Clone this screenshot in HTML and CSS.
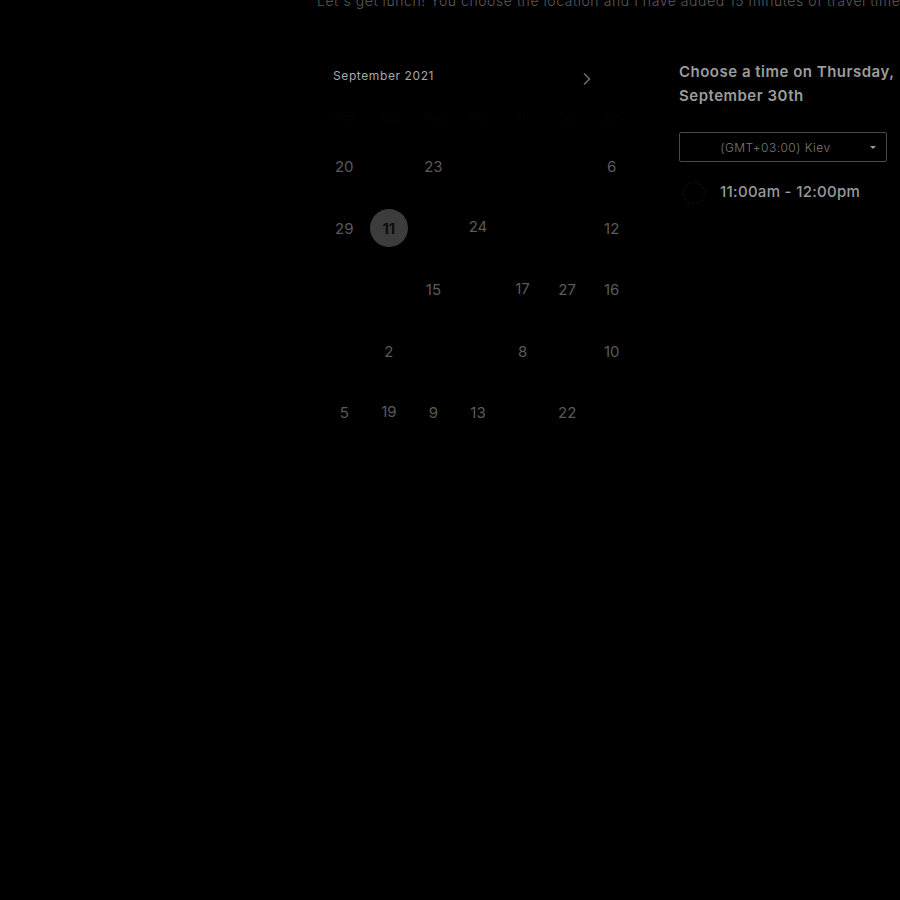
FILE: index.html
```html
<!DOCTYPE html>
<html lang="en">
<head>
<meta charset="utf-8">
<title>Choose a time</title>
<link rel="stylesheet" href="styles.css">
</head>
<body>
<div class="page">
  <p class="intro">Let's get lunch! You choose the location and I have added 15 minutes of travel time</p>
  <div class="content">
    <section class="calendar">
      <div class="cal-head">
        <span class="month">September 2021</span>
        <svg class="chev" width="10" height="14" viewBox="0 0 10 14"><path d="M2 1.5 L7.5 7 L2 12.5" fill="none" stroke="#6a6a6a" stroke-width="1.6"/></svg>
      </div>
      <div class="weekdays">
        <span>Mon</span><span>Tue</span><span>Wed</span><span>Thu</span><span>Fri</span><span>Sat</span><span>Sun</span>
      </div>
      <div class="days">
        <span class="day">20</span><span></span><span class="day">23</span><span></span><span></span><span></span><span class="day">6</span>
        <span class="day">29</span><span class="day"><b class="sel">11</b></span><span></span><span class="day up">24</span><span></span><span></span><span class="day">12</span>
        <span></span><span></span><span class="day">15</span><span></span><span class="day up1">17</span><span class="day">27</span><span class="day">16</span>
        <span></span><span class="day">2</span><span></span><span></span><span class="day">8</span><span></span><span class="day">10</span>
        <span class="day">5</span><span class="day up1">19</span><span class="day">9</span><span class="day">13</span><span></span><span class="day">22</span><span></span>
      </div>
    </section>
    <section class="panel">
      <h2 class="title">Choose a time on Thursday, September 30th</h2>
      <div class="select">
        <span class="select-text">(GMT+03:00) Kiev</span>
        <span class="caret"></span>
      </div>
      <div class="slot">
        <span class="radio"></span>
        <span class="slot-text">11:00am - 12:00pm</span>
      </div>
    </section>
  </div>
</div>
</body>
</html>
```

FILE: styles.css
```css
html, body {
  margin: 0;
  padding: 0;
  background: #000;
}
body {
  font-family: Inter, "Liberation Sans", sans-serif;
  color: #888;
  width: 900px;
  height: 900px;
  overflow: hidden;
}
.page {
  padding-left: 317px;
}
.intro {
  margin: -9px 0 0;
  font-size: 14px;
  font-weight: 300;
  line-height: 20px;
  color: #5c5c5c;
  white-space: nowrap;
  letter-spacing: 0.55px;
}
.content {
  display: flex;
  margin-top: 49px;
}
.calendar {
  flex: 0 0 312px;
  width: 312px;
  margin-left: 5px;
}
.cal-head {
  display: flex;
  align-items: center;
  justify-content: space-between;
  height: 30px;
  padding: 0 42px 0 11px;
}
.month {
  font-size: 12px;
  color: #a8a8a8;
  letter-spacing: 0.6px;
}
.chev {
  margin-top: 8px;
}
.weekdays {
  display: grid;
  grid-template-columns: repeat(7, 1fr);
  margin-top: 17px;
  height: 20px;
  line-height: 20px;
  font-size: 10px;
  text-align: center;
  color: #050505;
}
.days {
  display: grid;
  grid-template-columns: repeat(7, 1fr);
  grid-auto-rows: 61.5px;
  margin-top: 9px;
}
.day {
  display: flex;
  align-items: center;
  justify-content: center;
  font-size: 15px;
  color: #5a5a5a;
}
.day.up { padding-bottom: 4px; }
.day.up1 { padding-bottom: 2px; }
.sel {
  display: flex;
  align-items: center;
  justify-content: center;
  width: 38px;
  height: 38px;
  border-radius: 50%;
  background: #3c3c3c;
  color: #0d0d0d;
  font-weight: 700;
  font-size: 15px;
}
.panel {
  flex: 0 0 224px;
  width: 224px;
  margin-left: 45px;
}
.title {
  margin: 0;
  font-size: 15px;
  font-weight: 600;
  line-height: 24px;
  color: #9c9c9c;
  letter-spacing: 0.5px;
}
.select {
  position: relative;
  display: flex;
  align-items: center;
  justify-content: center;
  box-sizing: border-box;
  width: 208px;
  height: 30px;
  margin-top: 24px;
  border: 1px solid #4a4a4a;
  border-radius: 2px;
}
.select-text {
  font-size: 12px;
  font-weight: 300;
  color: #7a7a7a;
  margin-left: -15px;
  letter-spacing: 0.45px;
}
.caret {
  position: absolute;
  right: 10px;
  top: 13px;
  width: 0;
  height: 0;
  border-left: 3px solid transparent;
  border-right: 3px solid transparent;
  border-top: 3px solid #9a9a9a;
}
.slot {
  display: flex;
  align-items: center;
  margin-top: 17px;
  height: 24px;
}
.radio {
  box-sizing: border-box;
  width: 22px;
  height: 22px;
  margin-left: 4px;
  margin-top: 3px;
  border-radius: 50%;
  border: 1px dashed #111;
}
.slot-text {
  margin-left: 15px;
  font-size: 15px;
  font-weight: 500;
  color: #9a9a9a;
  letter-spacing: 0.3px;
}
```
